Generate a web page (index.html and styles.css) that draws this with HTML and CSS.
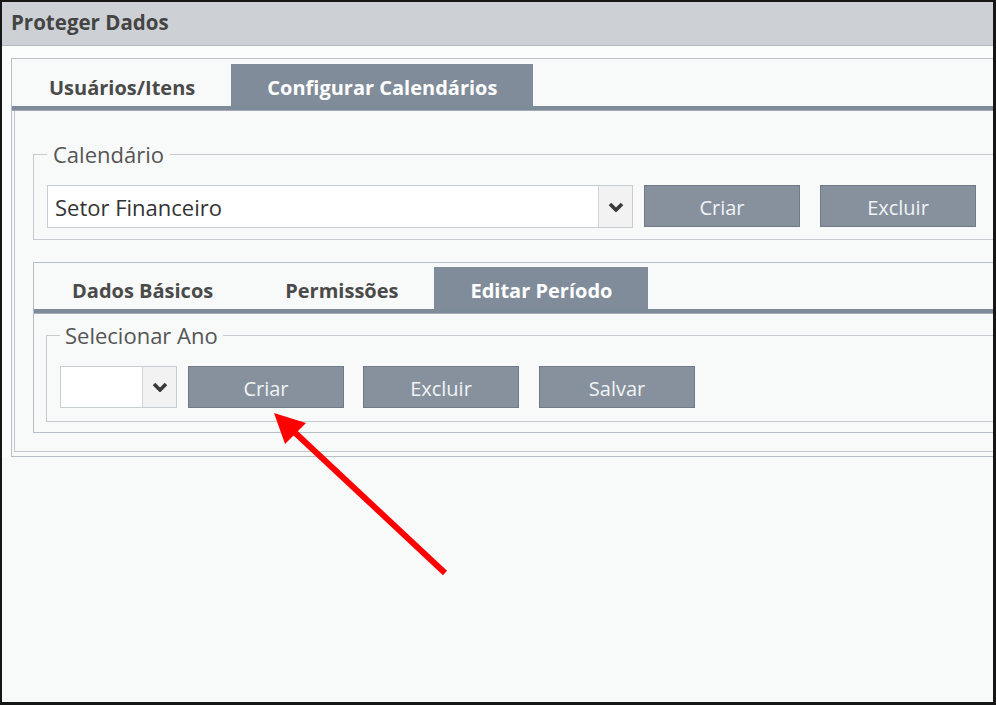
FILE: index.html
```html
<!DOCTYPE html>
<html lang="pt-BR">

<head>
    <meta charset="UTF-8">
    <meta name="viewport" content="width=device-width, initial-scale=1.0">
    <title>Proteger Dados</title>
    <link rel="stylesheet" href="styles.css">
</head>

<body>
    <div class="screen">
        <div class="titlebar">Proteger Dados</div>

        <div class="main">
            <div class="tabset">
                <div class="tabs">
                    <div class="tab">Usuários/Itens</div>
                    <div class="tab active">Configurar Calendários</div>
                </div>
                <div class="tab-bar"></div>

                <div class="tab-body">
                    <fieldset class="group group-calendar">
                        <legend>Calendário</legend>
                        <div class="row">
                            <div class="select select-wide">
                                <span class="select-value">Setor Financeiro</span>
                                <span class="select-arrow">
                                    <svg width="16" height="10" viewBox="0 0 16 10">
                                        <polyline points="2,2 8,8 14,2" fill="none" stroke="#3a3a3a" stroke-width="3.6" />
                                    </svg>
                                </span>
                            </div>
                            <button type="button" class="btn btn-first">Criar</button>
                            <button type="button" class="btn">Excluir</button>
                        </div>
                    </fieldset>

                    <div class="subtabset">
                        <div class="tabs subtabs">
                            <div class="tab">Dados Básicos</div>
                            <div class="tab">Permissões</div>
                            <div class="tab active">Editar Período</div>
                        </div>
                        <div class="tab-bar"></div>

                        <div class="subtab-body">
                            <fieldset class="group group-year">
                                <legend>Selecionar Ano</legend>
                                <div class="row">
                                    <div class="select select-small">
                                        <span class="select-value"></span>
                                        <span class="select-arrow">
                                            <svg width="16" height="10" viewBox="0 0 16 10">
                                                <polyline points="2,2 8,8 14,2" fill="none" stroke="#3a3a3a" stroke-width="3.6" />
                                            </svg>
                                        </span>
                                    </div>
                                    <button type="button" class="btn btn-first">Criar</button>
                                    <button type="button" class="btn btn-mid">Excluir</button>
                                    <button type="button" class="btn">Salvar</button>
                                </div>
                            </fieldset>
                        </div>
                    </div>
                </div>
            </div>
        </div>

        <!-- seta vermelha apontando para o botão Criar -->
        <svg class="pointer" width="996" height="705" viewBox="0 0 996 705">
            <line x1="445" y1="573" x2="290" y2="428" stroke="#ff0000" stroke-width="6" />
            <polygon points="274,413 306,423 285,444" fill="#ff0000" />
        </svg>
    </div>
</body>

</html>
```

FILE: styles.css
```css
/* Global styles */
body {
    margin: 0;
    padding: 0;
    font-family: "Open Sans", "Noto Sans", Arial, sans-serif;
    background-color: #fff;
}

.screen {
    position: relative;
    width: 996px;
    height: 705px;
    box-sizing: border-box;
    border: 2px solid #161616;
    border-right-width: 3px;
    border-bottom-width: 3px;
    background-color: #f8f9f9;
    overflow: hidden;
}

.titlebar {
    height: 43px;
    line-height: 41px;
    padding-left: 9px;
    background-color: #cdd1d5;
    border-bottom: 1px solid #b4bac1;
    font-size: 20.5px;
    font-weight: bold;
    color: #444;
}

.main {
    padding: 12px 0 0 9px;
    background-color: #fbfcfc;
}

/* Tabs */
.tabset {
    width: 1100px;
    border: 1px solid #b8bec5;
    background-color: #f8f9f9;
}

.tabs {
    display: flex;
    margin-top: 5px;
    padding-left: 1px;
}

.tab {
    height: 42px;
    line-height: 47px;
    padding: 0 36px;
    font-size: 20px;
    font-weight: bold;
    color: #4a4a4a;
    white-space: nowrap;
}

.tab.active {
    background-color: #808c9a;
    color: #fff;
}

.tab-bar {
    height: 5px;
    background-color: #7e8b99;
    border-bottom: 1px solid #a3acb6;
    box-sizing: border-box;
}

.tab-body {
    margin: 0 0 4px 2px;
    padding: 30px 0 18px 18px;
    border: 1px solid #c2c7cd;
    border-top: 0;
}

/* Groups */
.group {
    margin: 0;
    padding: 18px 13px 11px 13px;
    border: 1px solid #c6cbd0;
}

.group legend {
    padding: 0 6px;
    font-size: 22px;
    line-height: 26px;
    color: #555;
}

.group-year {
    padding: 18px 13px 13px 13px;
}

.group-year legend {
    padding: 0 5px;
}

.row {
    display: flex;
    align-items: flex-start;
}

/* Select boxes */
.select {
    display: flex;
    height: 43px;
    box-sizing: border-box;
    border: 1px solid #c8cdd2;
    background-color: #fff;
}

.select-wide {
    width: 586px;
}

.select-small {
    width: 117px;
    height: 42px;
}

.select-value {
    flex: 1;
    padding-left: 7px;
    font-size: 22px;
    line-height: 43px;
    color: #333;
}

.select-arrow {
    width: 33px;
    display: flex;
    align-items: center;
    justify-content: center;
    border-left: 1px solid #d0d4d8;
    background-color: #f2f2f2;
}

/* Buttons */
.btn {
    width: 156px;
    height: 42px;
    margin-left: 20px;
    padding: 3px 0 0;
    background-color: #86919d;
    border: 1px solid #6f7b87;
    color: #f1f3f5;
    font-family: "Open Sans", "Noto Sans", Arial, sans-serif;
    font-size: 20px;
    cursor: pointer;
}

.btn-first {
    margin-left: 11px;
}

.btn-mid {
    margin-left: 19px;
}

/* Inner tab set */
.subtabset {
    margin-top: 22px;
    border: 1px solid #b8bec5;
}

.subtabs {
    margin-top: 4px;
    padding-left: 2px;
}

.subtab-body {
    padding: 8px 0 10px 12px;
}

.pointer {
    position: absolute;
    top: -2px;
    left: -2px;
}
```
